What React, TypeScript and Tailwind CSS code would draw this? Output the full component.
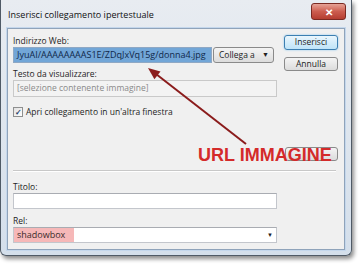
export default function App() {
  return (
    <div className="relative h-[267px] w-[359px] overflow-hidden bg-white font-['Open_Sans',sans-serif] text-[8.5px] text-[#1e1e1e]">
      {/* window frame */}
      <div className="flex h-[256px] w-[352px] flex-col rounded-b-[6px] border-x border-b border-[#4f5a66] bg-gradient-to-b from-[#e8ecf1] to-[#d4dfeb] px-[6px] pb-[5px] shadow-[2px_3px_4px_rgba(0,0,0,0.45)]">
        <div className="flex h-[28px] items-start justify-between">
          <span className="mt-[9px] ml-[1px] text-[9px] leading-[12px] text-[#111]">
            Inserisci collegamento ipertestuale
          </span>
          <div className="mt-[3px] mr-[-1px] flex h-[17px] w-[35px] items-center justify-center rounded-[3px] border border-[#7a2a22] bg-gradient-to-b from-[#e6a296] via-[#cc5d4f] to-[#b53d30] text-[10px] font-bold leading-none text-white">
            ✕
          </div>
        </div>

        {/* client area */}
        <div className="flex flex-1 flex-col border border-[#8fa3ba] bg-[#f0f0f0] pt-[6px] pr-[6px] pl-[5px] shadow-[0_0_0_1px_#c4d7ec]">
          <div className="flex items-start">
            <div className="flex w-[264px] flex-col">
              <div className="h-[12px] leading-[12px]">Indirizzo Web:</div>
              <div className="flex h-[16px]">
                <div className="flex w-[199px] items-center overflow-hidden border border-[#8fa8c4] bg-[#72a6d7] pl-[3px] text-[9px] whitespace-nowrap text-[#10284a]">
                  JyuAI/AAAAAAAAS1E/ZDqJxVq15g/donna4.jpg
                </div>
                <div className="ml-[1px] flex w-[61px] items-center justify-between rounded-[3px] border border-[#8a8a8a] bg-gradient-to-b from-[#f4f4f4] to-[#dcdcdc] pr-[4px] pl-[5px]">
                  <span>Collega a</span>
                  <span className="text-[7px]">▼</span>
                </div>
              </div>
              <div className="mt-[5px] h-[12px] leading-[12px]">Testo da visualizzare:</div>
              <div className="flex h-[17px] items-center border border-[#c9c9c9] bg-[#f3f3f3] pl-[3px] text-[#8a8a8a]">
                [selezione contenente immagine]
              </div>
            </div>
            <div className="ml-[7px] flex w-[54px] flex-col">
              <div className="flex h-[15px] items-center justify-center rounded-[3px] border border-[#3c7fb1] bg-gradient-to-b from-[#eaf6fd] to-[#bfe4f8] shadow-[0_0_2px_#7fc3ef]">
                Inserisci
              </div>
              <div className="mt-[7px] flex h-[14px] items-center justify-center rounded-[3px] border border-[#8a8a8a] bg-gradient-to-b from-[#f4f4f4] to-[#dcdcdc]">
                Annulla
              </div>
            </div>
          </div>

          <div className="mt-[9px] flex h-[12px] items-center">
            <div className="flex h-[10px] w-[10px] items-center justify-center border border-[#8e8f8f] bg-gradient-to-br from-[#e0e0e0] to-white text-[8px] leading-none font-bold text-[#253e6a]">
              ✓
            </div>
            <span className="ml-[3px] leading-[12px]">Apri collegamento in un'altra finestra</span>
          </div>

          {/* button hidden behind the annotation */}
          <div className="mt-[29px] flex justify-end">
            <div className="h-[14px] w-[53px] rounded-[3px] border border-[#8a8a8a] bg-gradient-to-b from-[#f4f4f4] to-[#dcdcdc]" />
          </div>

          <div className="mt-[9px] mr-[2px] h-[2px] border-t border-b border-t-[#c8c8c8] border-b-white" />

          <div className="mt-[9px] h-[12px] leading-[12px]">Titolo:</div>
          <div className="h-[16px] w-[264px] border border-[#c3c6cc] border-t-[#a9acb2] bg-white" />

          <div className="mt-[6px] h-[12px] leading-[12px]">Rel:</div>
          <div className="flex h-[16px] w-[264px] items-stretch border border-[#c3c6cc] border-t-[#a9acb2] bg-white">
            <div className="flex w-[60px] items-center bg-[#f6b8b8] pl-[3px] text-[9px] text-[#3a2a2a]">shadowbox</div>
            <div className="flex-1" />
            <div className="flex w-[12px] items-center justify-center text-[6px]">▼</div>
          </div>
        </div>
      </div>

      {/* annotation overlay */}
      <svg className="pointer-events-none absolute top-0 left-0" width="359" height="267">
        <line x1="246" y1="144" x2="156" y2="74" stroke="#8b1c1c" strokeWidth="2" />
        <polygon points="148,68 160.5,71.4 154.4,79.2" fill="#8b1c1c" />
      </svg>
      <div className="absolute top-[146px] left-[198px] font-['Liberation_Sans',Arial,sans-serif] text-[18px] leading-none font-bold text-[#d42a2a]">
        URL IMMAGINE
      </div>
    </div>
  );
}
